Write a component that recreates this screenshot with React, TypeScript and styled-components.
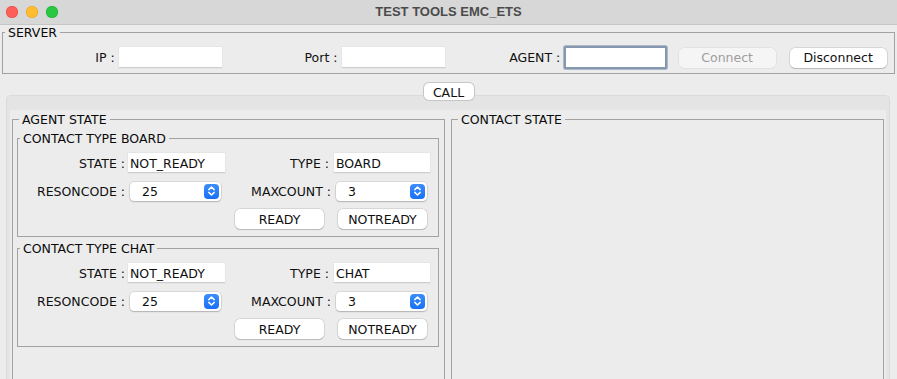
import React from 'react';
import styled, { createGlobalStyle } from 'styled-components';

const GlobalStyle = createGlobalStyle`
  html, body { margin: 0; padding: 0; background: #ececec; overflow: hidden; }
  body {
    font-family: "DejaVu Sans", "Noto Sans", sans-serif;
    font-size: 12.5px;
    color: #0f0f0f;
  }
  #root { width: 897px; height: 379px; overflow: hidden; }
  * { box-sizing: border-box; }
`;

const Window = styled.div`
  display: flex;
  flex-direction: column;
  width: 897px;
  height: 379px;
  background: #ececec;
`;

const TitleBar = styled.div`
  display: grid;
  grid-template-columns: 1fr auto 1fr;
  align-items: center;
  height: 25px;
  background: #d7d7d7;
  border-bottom: 1px solid #c6c6c6;
  flex-shrink: 0;
`;

const Lights = styled.div`
  display: flex;
  gap: 8px;
  padding-left: 6px;
`;

const Light = styled.span<{ $color: string; $edge: string }>`
  width: 12px;
  height: 12px;
  border-radius: 50%;
  background: ${(p) => p.$color};
  box-shadow: inset 0 0 0 0.5px ${(p) => p.$edge};
`;

const Title = styled.div`
  font-family: "Liberation Sans", Arial, sans-serif;
  font-weight: bold;
  font-size: 13px;
  color: #4b4b4b;
  margin-top: -1px;
`;

const Group = styled.fieldset<{ $pad?: string; $mt?: number }>`
  margin: ${(p) => p.$mt ?? 0}px 0 0 0;
  min-width: 0;
  border: 1px solid #a2a2a2;
  padding: ${(p) => p.$pad ?? '0'};
`;

const Legend = styled.legend`
  margin-left: 2px;
  padding: 0 3px 0 3px;
  line-height: 15px;
  font-size: 12.5px;
  color: #0a0a0a;
`;

const ServerGroup = styled(Group)`
  margin: 0 2px;
  padding: 6px 0 6px;
`;

const ServerGrid = styled.div`
  display: grid;
  grid-template-columns: repeat(4, 1fr);
  align-items: center;
  height: 21px;
`;

const ServerCell = styled.div<{ $center?: boolean }>`
  display: flex;
  align-items: center;
  justify-content: ${(p) => (p.$center ? 'center' : 'flex-end')};
  gap: ${(p) => (p.$center ? '14px' : '4px')};
  padding-right: ${(p) => (p.$center ? '0' : '4px')};
`;

const Label = styled.span`
  white-space: nowrap;
`;

const TextField = styled.div<{ $w: number; $h: number; $focus?: boolean }>`
  width: ${(p) => p.$w}px;
  height: ${(p) => p.$h}px;
  background: #fff;
  display: flex;
  align-items: center;
  padding-left: 2px;
  white-space: nowrap;
  box-shadow: ${(p) =>
    p.$focus
      ? 'inset 0 0 0 2px #8698b0, 0 0 0 0.5px #6f84a0'
      : 'inset 0 -1px 0 #cdcdcd, 0 0 0 0.5px #dedede'};
  border-radius: ${(p) => (p.$focus ? '1px' : '0')};
`;

const PushButton = styled.div<{ $w: number; $h: number; $disabled?: boolean }>`
  width: ${(p) => p.$w}px;
  height: ${(p) => p.$h}px;
  display: flex;
  align-items: center;
  justify-content: center;
  border-radius: 5px;
  background: ${(p) => (p.$disabled ? '#f5f5f5' : '#ffffff')};
  color: ${(p) => (p.$disabled ? '#9d9d9d' : '#0f0f0f')};
  box-shadow: ${(p) =>
    p.$disabled
      ? '0 0 0 0.5px rgba(0,0,0,0.08)'
      : '0 0 0 0.5px rgba(0,0,0,0.18), 0 1px 1px rgba(0,0,0,0.14)'};
  white-space: nowrap;
`;

const TabArea = styled.div`
  display: flex;
  flex-direction: column;
  align-items: center;
  margin-top: 9px;
`;

const CallTab = styled.div`
  width: 50px;
  height: 17px;
  display: flex;
  align-items: center;
  justify-content: center;
  background: #fff;
  border-radius: 5px;
  box-shadow: 0 0 0 1px #c6c6c6;
  margin-bottom: -5px;
  z-index: 1;
  padding-top: 1px;
`;

const TabPanel = styled.div`
  align-self: stretch;
  margin: 0 7px 0 6px;
  height: 300px;
  border: 1px solid #dadada;
  border-bottom: none;
  border-radius: 5px 5px 0 0;
  background: #e4e4e4;
  padding: 14px 3px 0 3px;
`;

const PanelBody = styled.div`
  height: 100%;
  background: #ececec;
  display: grid;
  grid-template-columns: 1fr 1fr;
  column-gap: 6px;
  padding: 2px 2px 0 2px;
`;

const StateGroup = styled(Group)`
  padding: 4px 5px 0 4px;
`;

const ContactGrid = styled.div`
  display: grid;
  grid-template-columns: 110px 97px 109px 96px;
  grid-template-rows: 20px 20px 20px;
  row-gap: 8px;
  align-items: center;
`;

const FormLabel = styled.span<{ $pr: number }>`
  justify-self: end;
  padding-right: ${(p) => p.$pr}px;
  white-space: nowrap;
`;

const SelectBox = styled.div<{ $ml: number }>`
  width: 91px;
  height: 19px;
  margin-left: ${(p) => p.$ml}px;
  background: #fff;
  border-radius: 4px;
  display: flex;
  align-items: center;
  justify-content: space-between;
  padding: 0 2px 0 12px;
  box-shadow: 0 0 0 0.5px rgba(0,0,0,0.16), 0 1px 1.5px rgba(0,0,0,0.18);
`;

const Stepper = styled.span`
  width: 15px;
  height: 15px;
  border-radius: 4px;
  background: linear-gradient(#3d8dfc, #1770f5);
  display: flex;
  align-items: center;
  justify-content: center;
`;

const ActionButton = styled(PushButton)<{ $ml: number }>`
  margin-left: ${(p) => p.$ml}px;
`;

const Chevrons = () => (
  <svg width="9" height="12" viewBox="0 0 9 12" fill="none">
    <path d="M1.8 4.6 L4.5 2 L7.2 4.6" stroke="#fff" strokeWidth="1.5" strokeLinecap="round" strokeLinejoin="round" />
    <path d="M1.8 7.4 L4.5 10 L7.2 7.4" stroke="#fff" strokeWidth="1.5" strokeLinecap="round" strokeLinejoin="round" />
  </svg>
);

const Select = ({ value, ml }: { value: string; ml: number }) => (
  <SelectBox $ml={ml}>
    <span>{value}</span>
    <Stepper>
      <Chevrons />
    </Stepper>
  </SelectBox>
);

const ContactType = ({ title, type, mt }: { title: string; type: string; mt: number }) => (
  <Group $pad="7px 0 7px 0" $mt={mt}>
    <Legend>{title}</Legend>
    <ContactGrid>
      <FormLabel $pr={3}>STATE :</FormLabel>
      <TextField $w={97} $h={20}>NOT_READY</TextField>
      <FormLabel $pr={5}>TYPE :</FormLabel>
      <TextField $w={96} $h={20}>{type}</TextField>

      <FormLabel $pr={3}>RESONCODE :</FormLabel>
      <Select value="25" ml={2} />
      <FormLabel $pr={3}>MAXCOUNT :</FormLabel>
      <Select value="3" ml={2} />

      <span />
      <span />
      <ActionButton $w={89} $h={20} $ml={10}>READY</ActionButton>
      <ActionButton $w={89} $h={20} $ml={4}>NOTREADY</ActionButton>
    </ContactGrid>
  </Group>
);

export default function App() {
  return (
    <>
      <GlobalStyle />
      <Window>
        <TitleBar>
          <Lights>
            <Light $color="#fe5f57" $edge="#e0443e" />
            <Light $color="#febc2e" $edge="#dea123" />
            <Light $color="#28c840" $edge="#1aab29" />
          </Lights>
          <Title>TEST TOOLS EMC_ETS</Title>
          <span />
        </TitleBar>

        <ServerGroup>
          <Legend>SERVER</Legend>
          <ServerGrid>
            <ServerCell>
              <Label>IP :</Label>
              <TextField $w={103} $h={21} />
            </ServerCell>
            <ServerCell>
              <Label>Port :</Label>
              <TextField $w={103} $h={21} />
            </ServerCell>
            <ServerCell>
              <Label>AGENT :</Label>
              <TextField $w={103} $h={23} $focus />
            </ServerCell>
            <ServerCell $center>
              <PushButton $w={97} $h={20} $disabled>Connect</PushButton>
              <PushButton $w={97} $h={20}>Disconnect</PushButton>
            </ServerCell>
          </ServerGrid>
        </ServerGroup>

        <TabArea>
          <CallTab>CALL</CallTab>
          <TabPanel>
            <PanelBody>
              <StateGroup>
                <Legend>AGENT STATE</Legend>
                <ContactType title="CONTACT TYPE BOARD" type="BOARD" mt={0} />
                <ContactType title="CONTACT TYPE CHAT" type="CHAT" mt={4} />
              </StateGroup>
              <StateGroup>
                <Legend>CONTACT STATE</Legend>
              </StateGroup>
            </PanelBody>
          </TabPanel>
        </TabArea>
      </Window>
    </>
  );
}
